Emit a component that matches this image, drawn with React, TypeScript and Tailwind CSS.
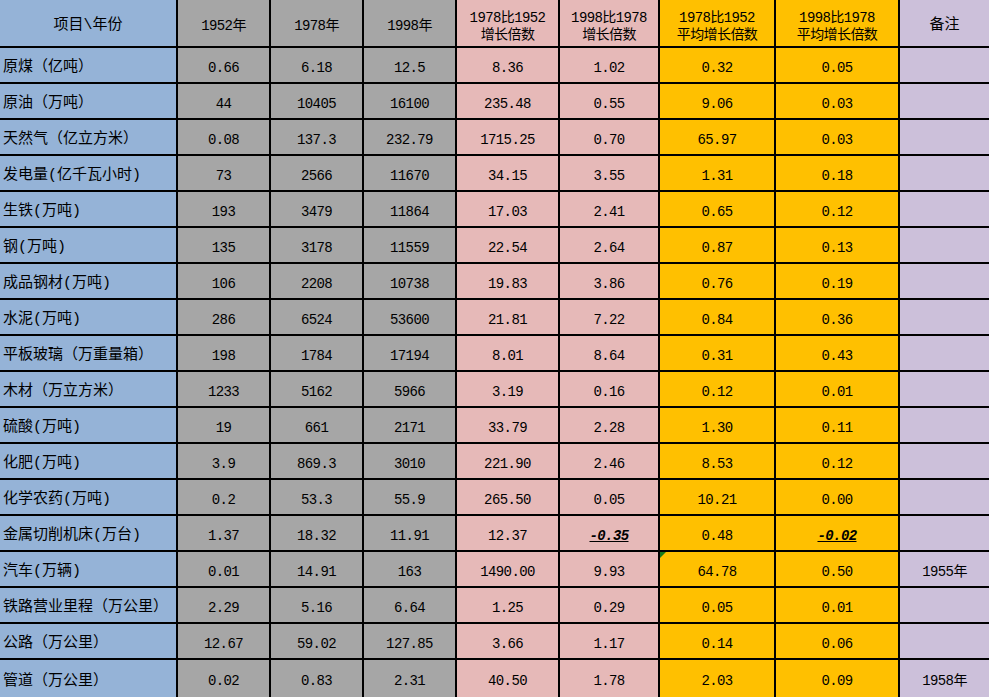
import React from 'react';

type Row = { name: string; v: string[]; note?: string };

const rows: Row[] = [
  { name: '原煤（亿吨）', v: ['0.66', '6.18', '12.5', '8.36', '1.02', '0.32', '0.05'] },
  { name: '原油（万吨）', v: ['44', '10405', '16100', '235.48', '0.55', '9.06', '0.03'] },
  { name: '天然气（亿立方米）', v: ['0.08', '137.3', '232.79', '1715.25', '0.70', '65.97', '0.03'] },
  { name: '发电量(亿千瓦小时)', v: ['73', '2566', '11670', '34.15', '3.55', '1.31', '0.18'] },
  { name: '生铁(万吨)', v: ['193', '3479', '11864', '17.03', '2.41', '0.65', '0.12'] },
  { name: '钢(万吨)', v: ['135', '3178', '11559', '22.54', '2.64', '0.87', '0.13'] },
  { name: '成品钢材(万吨)', v: ['106', '2208', '10738', '19.83', '3.86', '0.76', '0.19'] },
  { name: '水泥(万吨)', v: ['286', '6524', '53600', '21.81', '7.22', '0.84', '0.36'] },
  { name: '平板玻璃（万重量箱）', v: ['198', '1784', '17194', '8.01', '8.64', '0.31', '0.43'] },
  { name: '木材（万立方米）', v: ['1233', '5162', '5966', '3.19', '0.16', '0.12', '0.01'] },
  { name: '硫酸(万吨)', v: ['19', '661', '2171', '33.79', '2.28', '1.30', '0.11'] },
  { name: '化肥(万吨)', v: ['3.9', '869.3', '3010', '221.90', '2.46', '8.53', '0.12'] },
  { name: '化学农药(万吨)', v: ['0.2', '53.3', '55.9', '265.50', '0.05', '10.21', '0.00'] },
  { name: '金属切削机床(万台)', v: ['1.37', '18.32', '11.91', '12.37', '-0.35', '0.48', '-0.02'] },
  { name: '汽车(万辆)', v: ['0.01', '14.91', '163', '1490.00', '9.93', '64.78', '0.50'], note: '1955年' },
  { name: '铁路营业里程（万公里）', v: ['2.29', '5.16', '6.64', '1.25', '0.29', '0.05', '0.01'] },
  { name: '公路（万公里）', v: ['12.67', '59.02', '127.85', '3.66', '1.17', '0.14', '0.06'] },
  { name: '管道（万公里）', v: ['0.02', '0.83', '2.31', '40.50', '1.78', '2.03', '0.09'], note: '1958年' },
];

const colBg = ['bg-[#a6a6a6]', 'bg-[#a6a6a6]', 'bg-[#a6a6a6]', 'bg-[#e6b9b8]', 'bg-[#e6b9b8]', 'bg-[#ffc000]', 'bg-[#ffc000]'];

// header cells: two lines where needed
const heads = [
  { bg: 'bg-[#a6a6a6]', lines: ['1952年'] },
  { bg: 'bg-[#a6a6a6]', lines: ['1978年'] },
  { bg: 'bg-[#a6a6a6]', lines: ['1998年'] },
  { bg: 'bg-[#e6b9b8]', lines: ['1978比1952', '增长倍数'] },
  { bg: 'bg-[#e6b9b8]', lines: ['1998比1978', '增长倍数'] },
  { bg: 'bg-[#ffc000]', lines: ['1978比1952', '平均增长倍数'] },
  { bg: 'bg-[#ffc000]', lines: ['1998比1978', '平均增长倍数'] },
];

const App = () => {
  return (
    <div className="w-[989px] h-[697px] overflow-hidden bg-black font-['Liberation_Mono','Noto_Sans_CJK_SC',monospace] text-black">
      <div className="grid grid-cols-[176px_91px_91px_91px_101px_98px_114px_122px_89px] grid-rows-[46px_repeat(17,34px)_37px] gap-[2px]">
        <div className="bg-[#95b3d7] flex items-center justify-center pt-[6px] text-[15px]">项目\年份</div>
        {heads.map((h, i) => (
          <div key={i} className={`${h.bg} flex flex-col items-center justify-center pt-[7px] text-[14px] tracking-[-0.6px] leading-[17px]`}>
            {h.lines.map(l => <span key={l} className="whitespace-nowrap">{l}</span>)}
          </div>
        ))}
        <div className="bg-[#ccc0da] flex items-center justify-center pt-[6px] text-[15px]">备注</div>

        {rows.map((r, ri) => (
          <React.Fragment key={r.name}>
            <div className="bg-[#95b3d7] flex items-center pl-[3px] pt-[7px] text-[15px] whitespace-nowrap">{r.name}</div>
            {r.v.map((x, i) => (
              <div key={i} className={`${colBg[i]} relative flex items-center justify-center pt-[6px] text-[14px] tracking-[-0.6px]`}>
                {x.startsWith('-') ? (
                  <span className="font-bold italic underline">{x}</span>
                ) : (
                  <span>{x}</span>
                )}
                {ri === 14 && i === 5 && (
                  <svg className="absolute left-0 top-0" width="6" height="6" viewBox="0 0 6 6">
                    <polygon points="0,0 6,0 0,6" fill="#1a7a1a" />
                  </svg>
                )}
              </div>
            ))}
            <div className="bg-[#ccc0da] flex items-center justify-center pt-[6px] text-[14px] tracking-[-0.6px]">{r.note || ''}</div>
          </React.Fragment>
        ))}
      </div>
    </div>
  );
};

export default App;
